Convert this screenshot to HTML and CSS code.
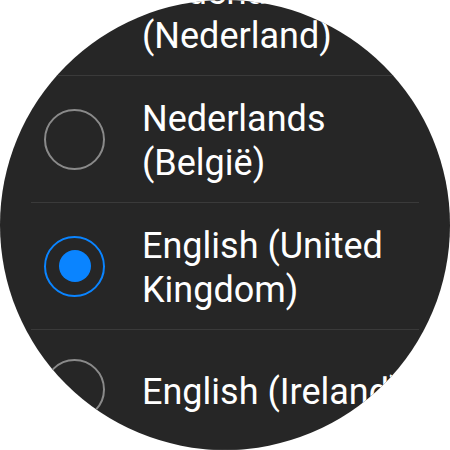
FILE: index.html
```html
<!DOCTYPE html>
<html>
<head>
  <link rel="stylesheet" href="styles.css">
</head>
<body>
  <div class="watch">
    <ul class="lang-list">
      <li class="item">
        <span class="radio"></span>
        <span class="label">Nederlands (Nederland)</span>
      </li>
      <li class="item">
        <span class="radio"></span>
        <span class="label">Nederlands (België)</span>
      </li>
      <li class="item">
        <span class="radio checked"></span>
        <span class="label">English (United Kingdom)</span>
      </li>
      <li class="item">
        <span class="radio"></span>
        <span class="label single">English (Ireland)</span>
      </li>
    </ul>
  </div>
</body>
</html>
```

FILE: styles.css
```css
body { margin: 0; background: #fff; }
.watch {
  width: 450px;
  height: 450px;
  border-radius: 50%;
  overflow: hidden;
  background: #262626;
  font-family: Roboto, "Noto Sans", sans-serif;
  color: #fff;
}
.lang-list {
  list-style: none;
  margin: -51px 0 0;
  padding: 0;
}
.item {
  display: flex;
  align-items: center;
  min-height: 120px;
  box-sizing: border-box;
  margin: 0 31px;
  padding: 17px 0 17px 13px;
  border-bottom: 1px solid #3a3a3a;
}
.radio {
  flex: none;
  width: 61px;
  height: 61px;
  box-sizing: border-box;
  border: 2px solid #8a8a8a;
  border-radius: 50%;
  display: flex;
  align-items: center;
  justify-content: center;
  margin-right: 37px;
}
.radio.checked { border-color: #0a84ff; }
.radio.checked::after {
  content: "";
  width: 32px;
  height: 32px;
  border-radius: 50%;
  background: #0a84ff;
}
.label {
  flex: 1;
  font-size: 36px;
  line-height: 44px;
  padding-top: 4px;
}
.single { white-space: nowrap; }
```
